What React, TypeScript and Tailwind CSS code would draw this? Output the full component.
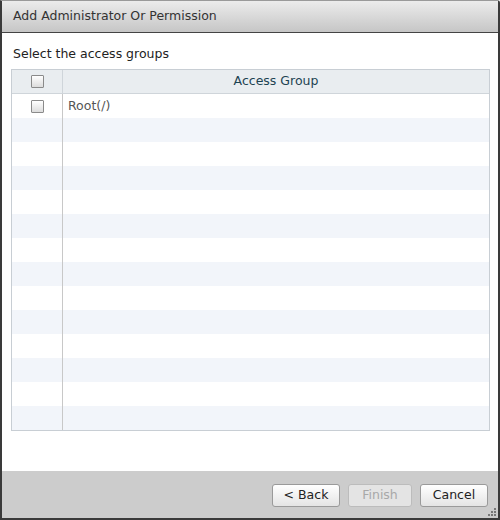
import React from 'react'

const rows = Array.from({ length: 14 }, (_, i) => i)

function Checkbox() {
  return (
    <div className="w-[13px] h-[13px] border border-[#8a8a8a] bg-gradient-to-b from-[#ffffff] to-[#dcdcdc] rounded-[1px]" />
  )
}

export default function App() {
  return (
    <div
      className="w-[500px] h-[520px] flex flex-col bg-white border-x-2 border-b-2 border-t border-x-[#3a3a3a] border-b-[#3a3a3a] border-t-[#9a9a9a] rounded-tr-[3px] text-[#333]"
      style={{ fontFamily: '"DejaVu Sans", Verdana, sans-serif' }}
    >
      {/* Title */}
      <div className="h-[32px] shrink-0 flex items-center pl-[11px] text-[12.5px] bg-gradient-to-b from-[#ececec] to-[#c6c6c6] border-b border-[#444]">
        Add Administrator Or Permission
      </div>

      {/* Content */}
      <div className="flex-1 pt-[12px] pl-[9px] pr-[8px]">
        <div className="text-[12.5px] leading-[17px] mb-[7px] pl-[2px] text-[#222]">Select the access groups</div>
        <div className="border border-[#c8ced4]">
          <div className="h-[24px] flex bg-[#e9edf0] border-b border-[#cfd5da]">
            <div className="w-[51px] flex items-center justify-center border-r border-[#cfd5da]">
              <Checkbox />
            </div>
            <div className="flex-1 flex items-center justify-center text-[12.5px] text-[#1d4352]">Access Group</div>
          </div>
          {rows.map((i) => (
            <div key={i} className={`h-[24px] flex ${i % 2 === 1 ? 'bg-[#f2f5fa]' : 'bg-white'}`}>
              <div className="w-[51px] flex items-center justify-center border-r border-[#c8c8c8]">
                {i === 0 && <Checkbox />}
              </div>
              <div className="flex-1 flex items-center pl-[5px] text-[12.5px] text-[#555]">
                {i === 0 ? 'Root(/)' : ''}
              </div>
            </div>
          ))}
        </div>
      </div>

      {/* Footer */}
      <div className="h-[47px] shrink-0 bg-[#cccccc] flex justify-end items-start pt-[13px] pr-[10px] gap-[8px] relative">
        <button className="w-[68px] h-[23px] rounded-[3px] border border-[#9a9a9a] bg-gradient-to-b from-[#ffffff] to-[#e4e4e4] text-[12.5px] text-[#222]">
          &lt; Back
        </button>
        <button className="w-[64px] h-[23px] rounded-[3px] border border-[#bcbcbc] bg-[#e4e4e4] text-[12.5px] text-[#a8a8a8]">
          Finish
        </button>
        <button className="w-[68px] h-[23px] rounded-[3px] border border-[#9a9a9a] bg-gradient-to-b from-[#ffffff] to-[#e4e4e4] text-[12.5px] text-[#222]">
          Cancel
        </button>
        <svg className="absolute right-[1px] bottom-[1px]" width="9" height="9" viewBox="0 0 9 9">
          <rect x="6" y="0" width="2" height="2" fill="#777" />
          <rect x="3" y="3" width="2" height="2" fill="#777" />
          <rect x="6" y="3" width="2" height="2" fill="#777" />
          <rect x="0" y="6" width="2" height="2" fill="#777" />
          <rect x="3" y="6" width="2" height="2" fill="#777" />
          <rect x="6" y="6" width="2" height="2" fill="#777" />
        </svg>
      </div>
    </div>
  )
}
